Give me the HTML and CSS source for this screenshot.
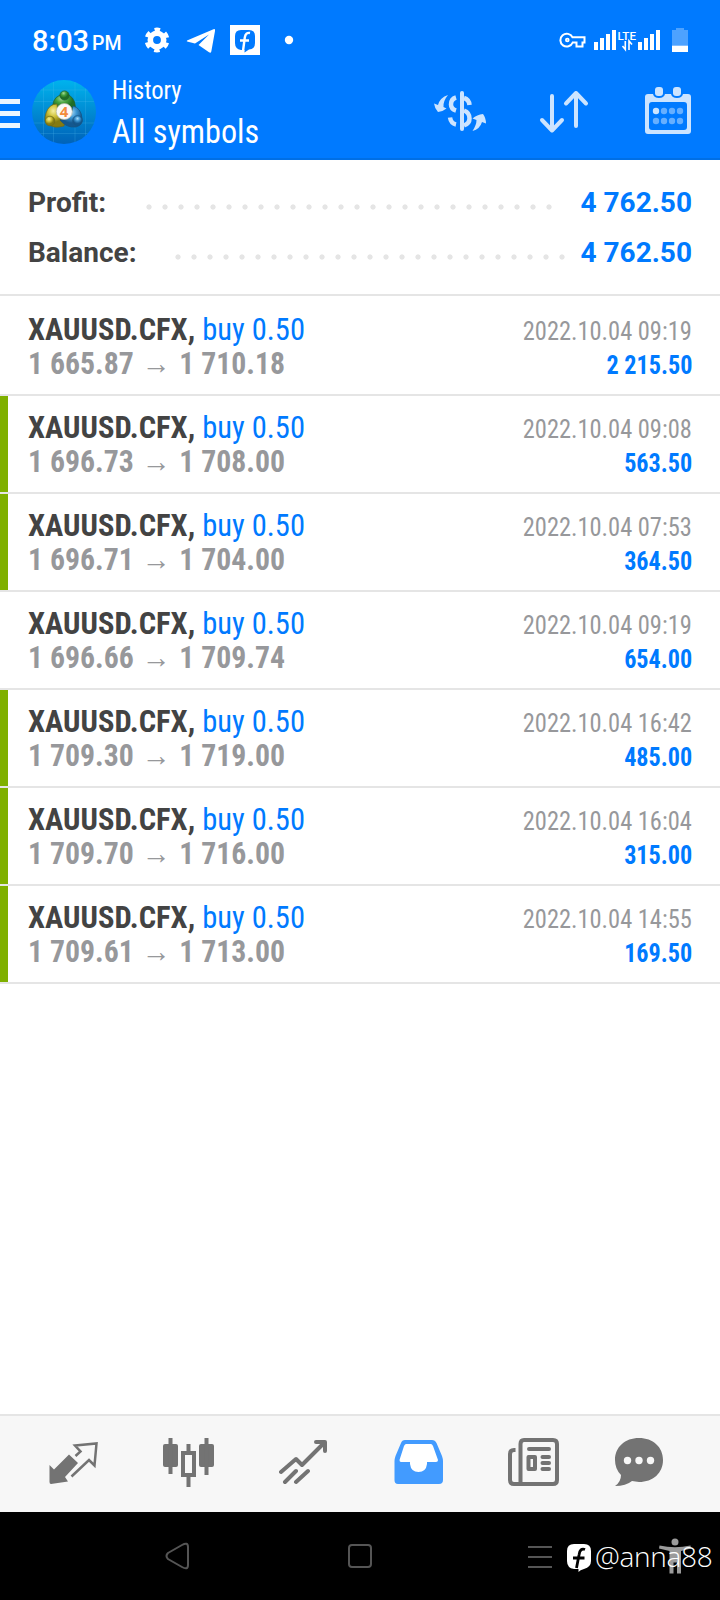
FILE: index.html
```
<!DOCTYPE html>
<html lang="en">
<head>
<meta charset="utf-8">
<title>History</title>
<link rel="stylesheet" href="styles.css">
</head>
<body>
<header class="top">
  <div class="status">
    <span class="clock">8:03</span><span class="ampm">PM</span>
    <svg class="status-icons" width="150" height="32" viewBox="144 24 150 32">
      <g fill="none" stroke="#fff"><circle cx="157" cy="40" r="6.700" stroke-width="5.600"/><circle cx="157" cy="40" r="10.600" stroke-width="3.600" stroke-dasharray="5.600 5.500" stroke-dashoffset="-2.750"/></g>
      <path d="M187 40.500 L213.500 29.300 Q215.500 28.500 215 31 L211.300 51.500 Q210.800 53.500 209 52.300 L198.500 45 L209 34.500 L195 43.500 L188 41.800 Q186 41.200 187 40.500Z" fill="#fff"/>
      <rect x="230" y="25" width="30" height="30" fill="#fff"/>
      <path d="M241 30 H249 Q255 30 255 36 V43 Q255 49 249 49.500 L244.500 52.500 V50 H241 Q235 49 235 43 V36 Q235 30 241 30Z" fill="#007aff"/>
      <path d="M250 33 Q245.700 32 244.800 37.500 L243 51 M240 40.500 H249" fill="none" stroke="#fff" stroke-width="2.400"/>
      <circle cx="289" cy="40" r="4.200" fill="#fff"/>
    </svg>
    <svg class="signal" width="132" height="28" viewBox="558 26 132 28">
      <g fill="none" stroke="#fff" stroke-width="2"><path d="M572.500 37.300 H584.500 V42.500 H582.500 V46.500 H576.500 V42.500 H572.700 A6.400 6.400 0 1 1 572.500 37.300Z"/><circle cx="567.300" cy="40" r="1.400" stroke-width="1.800"/></g>
      <path fill="#fff" d="M594 42h4v8h-4zM600 38h4v12h-4zM606 34h4v16h-4zM612 30h4v20h-4zM638 42h4v8h-4zM644 38h4v12h-4zM650 34h4v16h-4zM656 30h4v20h-4z"/>
      <text x="617.500" y="40" class="lte" textLength="18.500" lengthAdjust="spacingAndGlyphs">LTE</text>
      <path d="M625.300 41 V49.500 L622.500 46 M629 50 V41 L632 44.500" fill="none" stroke="#fff" stroke-width="1.600"/>
      <path d="M672 30h4v-2h8v2h4v16h-16z" fill="#4da2ff"/><path d="M672 45.700h16V52h-16z" fill="#fff"/>
    </svg>
  </div>
  <div class="bar">
    <svg class="brand" width="98" height="66" viewBox="0 79 98 66">
      <defs>
        <linearGradient id="sky" x1="0" y1="0" x2="0" y2="1"><stop offset="0" stop-color="#00b3ed"/><stop offset="1" stop-color="#0062b8"/></linearGradient>
        <radialGradient id="gr" cx=".4" cy=".25"><stop offset="0" stop-color="#a7d99b"/><stop offset=".5" stop-color="#46a33e"/><stop offset="1" stop-color="#1f6d25"/></radialGradient>
        <radialGradient id="ye" cx=".4" cy=".3"><stop offset="0" stop-color="#f5efa0"/><stop offset=".5" stop-color="#cfc23a"/><stop offset="1" stop-color="#857b12"/></radialGradient>
        <radialGradient id="bl" cx=".5" cy=".3"><stop offset="0" stop-color="#a8dcfa"/><stop offset=".5" stop-color="#3c95d2"/><stop offset="1" stop-color="#14588f"/></radialGradient>
        <clipPath id="disc"><circle cx="64" cy="112" r="32"/></clipPath>
      </defs>
      <path d="M0 99h20v5H0zM0 111h20v5H0zM0 123h20v5H0z" fill="#ebf5ff"/>
      <circle cx="64" cy="112" r="32" fill="url(#sky)"/>
      <path clip-path="url(#disc)" d="M43.500 79v66M53.500 79v66M75 79v66M85.500 79v66M30 90h68M30 101.500h68M30 123h68M30 133.500h68" stroke="#55bdf3" stroke-opacity=".22"/>
      <g stroke-width=".7">
        <path d="M53 111 Q51 99 60 95 Q64 93 69 95 Q77 100 75 112 L65 107Z" fill="url(#gr)" stroke="#1c5f35"/>
        <path d="M57 104 Q49 104 46 113 Q43 122 48 124 Q54 129 64 126 L66 119 Q57 116 57 104Z" fill="url(#ye)" stroke="#6d681b"/>
        <path d="M73 106 Q81 108 82 118 Q83 125 76 127 Q66 128 60 120 Q72 119 73 106Z" fill="url(#bl)" stroke="#17527f"/>
        <circle cx="64.500" cy="95.500" r="4.600" fill="url(#gr)" stroke="#1c5f35"/>
        <circle cx="50" cy="121" r="4.800" fill="url(#ye)" stroke="#6d681b"/>
        <circle cx="77.500" cy="120.500" r="4.800" fill="url(#bl)" stroke="#17527f"/>
        <circle cx="64.300" cy="111.500" r="8" fill="#fafafa" stroke="#b9bcae"/>
      </g>
      <text x="64" y="117" class="four" text-anchor="middle">4</text>
    </svg>
    <div class="titles"><div class="screen-name cond">History</div><div class="filter cond">All symbols</div></div>
    <svg class="actions" width="260" height="56" viewBox="432 84 260 56">
      <g fill="#cce4ff"><path d="M448 95 Q440 97.500 438 105 L434 103.500 Q434.500 108 438 112 Q443 111.500 446.500 108.500 L443.500 107 Q443 101 448 95Z"/>
      <path d="M472.500 131 Q476.500 125 476.500 120 L472.500 118.500 Q477 114.500 483 114 Q486 118 486 123.500 L482 122 Q480 129 472.500 131Z"/></g>
      <g fill="none" stroke="#cce4ff" stroke-width="4.500"><path d="M462 93V129" stroke-width="4" stroke-linecap="round"/><path d="M456 97.500 Q451 99 451 104.500 Q451 109 456 110.500 M464 98 Q469 99.500 469.500 105 M450 117.500 Q451 123.500 456 124.500 M464 110.500 Q469.500 112.500 469.500 118.500 Q469.500 123.500 464 125.500"/></g>
      <path d="M552 96V129 M542 120L552 130.500L562 120 M576 126V93 M566 103.500L576 93L586 103.500" fill="none" stroke="#cce4ff" stroke-width="4" stroke-linecap="round" stroke-linejoin="round"/>
      <path fill="#cce4ff" fill-rule="evenodd" d="M648 94H653Q654 98 659 98Q664 98 665 94H671Q672 98 677 98Q682 98 683 94H688Q691 94 691 97V131Q691 134 688 134H648Q645 134 645 131V97Q645 94 648 94ZM652 102Q649 102 649 105V127Q649 130 652 130H684Q687 130 687 127V105Q687 102 684 102Z"/>
      <rect x="655" y="87" width="8" height="9" rx="3" fill="#cce4ff"/><rect x="673" y="87" width="8" height="9" rx="3" fill="#cce4ff"/>
      <g fill="#66afff"><circle cx="656" cy="111" r="3.200" fill="#cce4ff"/><circle cx="664" cy="111" r="3.200"/><circle cx="672" cy="111" r="3.200"/><circle cx="680" cy="111" r="3.200"/><circle cx="656" cy="121" r="3.200"/><circle cx="664" cy="121" r="3.200"/><circle cx="672" cy="121" r="3.200"/><circle cx="680" cy="121" r="3.200"/></g>
    </svg>
  </div>
</header>
<section class="summary">
  <div class="sum-row"><span class="sum-label">Profit:</span><i class="dots dots-profit"></i><span class="sum-value">4 762.50</span></div>
  <div class="sum-row"><span class="sum-label">Balance:</span><i class="dots dots-balance"></i><span class="sum-value">4 762.50</span></div>
</section>
<main class="deals cond">
  <article class="deal first"><div class="line"><span class="name"><b>XAUUSD.CFX,</b> <span class="side">buy 0.50</span></span><time>2022.10.04 09:19</time></div><div class="line"><span class="prices"><b>1 665.87</b><i class="arrow">→</i><b>1 710.18</b></span><b class="gain">2 215.50</b></div></article>
  <article class="deal tp"><div class="line"><span class="name"><b>XAUUSD.CFX,</b> <span class="side">buy 0.50</span></span><time>2022.10.04 09:08</time></div><div class="line"><span class="prices"><b>1 696.73</b><i class="arrow">→</i><b>1 708.00</b></span><b class="gain">563.50</b></div></article>
  <article class="deal tp"><div class="line"><span class="name"><b>XAUUSD.CFX,</b> <span class="side">buy 0.50</span></span><time>2022.10.04 07:53</time></div><div class="line"><span class="prices"><b>1 696.71</b><i class="arrow">→</i><b>1 704.00</b></span><b class="gain">364.50</b></div></article>
  <article class="deal"><div class="line"><span class="name"><b>XAUUSD.CFX,</b> <span class="side">buy 0.50</span></span><time>2022.10.04 09:19</time></div><div class="line"><span class="prices"><b>1 696.66</b><i class="arrow">→</i><b>1 709.74</b></span><b class="gain">654.00</b></div></article>
  <article class="deal tp"><div class="line"><span class="name"><b>XAUUSD.CFX,</b> <span class="side">buy 0.50</span></span><time>2022.10.04 16:42</time></div><div class="line"><span class="prices"><b>1 709.30</b><i class="arrow">→</i><b>1 719.00</b></span><b class="gain">485.00</b></div></article>
  <article class="deal tp"><div class="line"><span class="name"><b>XAUUSD.CFX,</b> <span class="side">buy 0.50</span></span><time>2022.10.04 16:04</time></div><div class="line"><span class="prices"><b>1 709.70</b><i class="arrow">→</i><b>1 716.00</b></span><b class="gain">315.00</b></div></article>
  <article class="deal tp"><div class="line"><span class="name"><b>XAUUSD.CFX,</b> <span class="side">buy 0.50</span></span><time>2022.10.04 14:55</time></div><div class="line"><span class="prices"><b>1 709.61</b><i class="arrow">→</i><b>1 713.00</b></span><b class="gain">169.50</b></div></article>
</main>
<nav class="tabs">
  <svg width="50" height="52" viewBox="49 1436 50 52"><path fill="#737373" d="M49.500 1465 L54 1469.500 L69 1454.500 L78 1463 L65 1477 L68 1481.500 L51 1484 Q49.500 1484 49.500 1482Z"/><path d="M75.500 1456L80.500 1451.500L75 1445.500L96.500 1443.500L94.500 1465.500L89 1460L71.500 1476.500" fill="none" stroke="#737373" stroke-width="2.500"/></svg>
  <svg width="52" height="52" viewBox="163 1436 52 52"><g fill="#737373"><rect x="163" y="1444" width="15" height="23" rx="2"/><rect x="199" y="1444" width="15" height="23" rx="2"/><path d="M168.500 1438h4v36h-4zM204.500 1438h4v37h-4zM186.500 1444h4v8h-4zM186.500 1476h4v11h-4z"/></g><rect x="183" y="1453" width="11" height="22" fill="none" stroke="#737373" stroke-width="4"/></svg>
  <svg width="50" height="52" viewBox="279 1436 50 52"><path d="M281 1472L296 1459L302 1465L324 1443M316 1442H325V1451M285 1482L296 1471M296 1482L308 1471" fill="none" stroke="#737373" stroke-width="4" stroke-linecap="round" stroke-linejoin="round"/></svg>
  <svg width="50" height="52" viewBox="393 1436 50 52"><path fill="#429bff" d="M405 1440H432Q435 1440 436.500 1443L442 1456Q443 1459 443 1461V1480Q443 1484 439 1484H398Q394.500 1484 394.500 1480V1461Q394.500 1459 395.500 1456L401 1443Q402 1440 405 1440Z"/><path fill="#fff" d="M406 1444H431Q432 1444 433 1446L438 1460Q438 1462 436 1462H427V1464Q426 1472 418.500 1472Q411 1472 410 1464V1462H401Q399.500 1462 399.500 1460L404 1446Q405 1444 406 1444Z"/></svg>
  <svg width="52" height="52" viewBox="507 1436 52 52"><g fill="none" stroke="#737373" stroke-width="4"><path d="M515.500 1450H514Q510 1450 510 1454V1480Q510 1484 514 1484H553Q557 1484 557 1480V1444Q557 1440 553 1440H524Q520.500 1440 520.500 1444V1484"/><path d="M529 1449H549M542.500 1457H549M542.500 1463H549M542.500 1469H549" stroke-linecap="round"/><path d="M528.500 1457H535V1469H528.500Z" stroke-linejoin="round"/></g></svg>
  <svg class="chat" width="50" height="52" viewBox="614 1436 50 52"><path fill="#737373" d="M639 1438C653 1438 663 1447 663 1460C663 1473 653 1482 639 1482L632 1481Q626 1486 615 1486Q621 1482 621 1475Q615 1469 615 1460C615 1447 625 1438 639 1438Z"/><g fill="#f7f7f7"><circle cx="627.500" cy="1460.500" r="3.700"/><circle cx="639" cy="1460.500" r="3.700"/><circle cx="650.500" cy="1460.500" r="3.700"/></g></svg>
</nav>
<footer class="system">
  <svg width="396" height="60" viewBox="164 1526 396 60"><g fill="none" stroke="#555" stroke-width="2"><path d="M168 1553L182 1545Q188 1541.500 188 1547V1565Q188 1570.500 182 1567L168 1559Q165 1556 168 1553Z"/><rect x="349" y="1545" width="22" height="22" rx="3"/><path d="M528 1547H552M528 1557H552M528 1567H552"/></g></svg>
  <div class="credit">
    <svg class="person" width="32" height="38" viewBox="659 1537 32 38"><g fill="#9b9b9b"><circle cx="675" cy="1542" r="3.500"/><path d="M659.500 1545.500Q675 1549 690.500 1545.500L691 1548.500L681 1551V1573.500H677V1562.500H673.500V1573.500H669.500V1551L659 1548.500Z"/></g></svg>
    <svg width="26" height="30" viewBox="566 1543 26 30"><path fill="#fff" d="M574 1544H584Q591 1544 591 1551V1561Q591 1567 584 1569Q580 1570 578.500 1572V1569H574Q567 1568 567 1561V1551Q567 1544 574 1544Z"/><path d="M585 1549.500Q580 1547.500 579 1555L576.500 1568M573 1558H584.500" fill="none" stroke="#000" stroke-width="2.800"/></svg>
    <span class="handle">@anna88</span>
  </div>
</footer>
</body>
</html>
```
FILE: styles.css
```
* { box-sizing: border-box; }
body { margin: 0; width: 720px; height: 1600px; display: flex; flex-direction: column; background: #fff; font-family: Roboto, sans-serif; overflow: hidden; }
svg { display: block; flex: none; }
b { font-weight: 700; }
i { font-style: normal; }
.cond { font-family: "Roboto Condensed", Roboto, sans-serif; font-stretch: 75%; }
.top { height: 160px; background: #007aff; color: #fff; border-bottom: 2px solid #006fe5; }
.status { height: 78px; display: flex; align-items: flex-start; padding: 24px 30px 0 32px; }
.clock { font-size: 29px; line-height: 34px; font-weight: 500; width: 60px; white-space: nowrap; }
.ampm { font-size: 19.5px; line-height: 40px; font-weight: 500; width: 52px; }
.signal { margin: 2px 0 0 auto; }
.lte { font: 500 11px Roboto, sans-serif; fill: #fff; }
.four { font: 700 15px "Open Sans", sans-serif; fill: #f28b3c; }
.bar { height: 80px; display: flex; }
.brand { margin-top: 1px; }
.titles { margin-left: 14px; white-space: nowrap; transform: scaleX(.947); transform-origin: left; }
.screen-name { font-size: 26px; line-height: 30px; margin-top: -3px; }
.filter { font-size: 34px; line-height: 40px; margin-top: 6px; }
.actions { margin: 6px 28px 0 auto; }
.summary { height: 136px; padding: 18px 28px 0; border-bottom: 2px solid #e5e5e5; }
.sum-row { height: 50px; display: flex; font-size: 28px; line-height: 50px; font-weight: 700; color: #434343; }
.sum-value { color: #007aff; margin-left: auto; }
.dots { height: 6px; margin-top: 26px; background: radial-gradient(circle at 3px 3px, #e5e5e5 2.2px, transparent 3px) 0 0 / 16px 6px; }
.dots-profit { width: 408px; margin-left: 40px; }
.dots-balance { width: 390px; margin-left: 38px; }
.deals { flex: 1; }
.deal { height: 98px; padding: 14px 28px 0; border-bottom: 2px solid #e5e5e5; }
.first { height: 100px; padding-top: 16px; }
.tp { background: linear-gradient(#7fb000, #7fb000) 0 0 / 8px 96px no-repeat; }
.line { display: flex; justify-content: space-between; align-items: baseline; height: 34px; line-height: 34px; font-size: 32px; white-space: nowrap; }
.name { color: #434343; transform: scaleX(.954); transform-origin: left; }
.side { color: #007aff; }
time { font-size: 26px; color: #97989b; transform: scaleX(.94); transform-origin: right; }
.prices { display: flex; align-items: baseline; color: #97989b; transform: scaleX(.93); transform-origin: left; }
.arrow { width: 49px; height: 34px; text-align: center; font-size: 31px; }
.gain { color: #007aff; font-size: 26px; transform: scaleX(.93); transform-origin: right; }
.tabs { height: 98px; border-top: 2px solid #e5e5e5; background: #f7f7f7; display: flex; gap: 64px; padding: 20px 0 0 49px; }
.chat { margin-left: -9px; }
.system { height: 88px; background: #000; display: flex; padding: 14px 7px 0 164px; }
.credit { position: relative; display: flex; margin-left: 6px; padding-top: 17px; }
.person { position: absolute; left: 93px; top: 11px; }
.handle { position: relative; color: #fff; font: 300 28px/26px "Open Sans", sans-serif; letter-spacing: -.3px; margin-left: 3px; white-space: nowrap; }
```
